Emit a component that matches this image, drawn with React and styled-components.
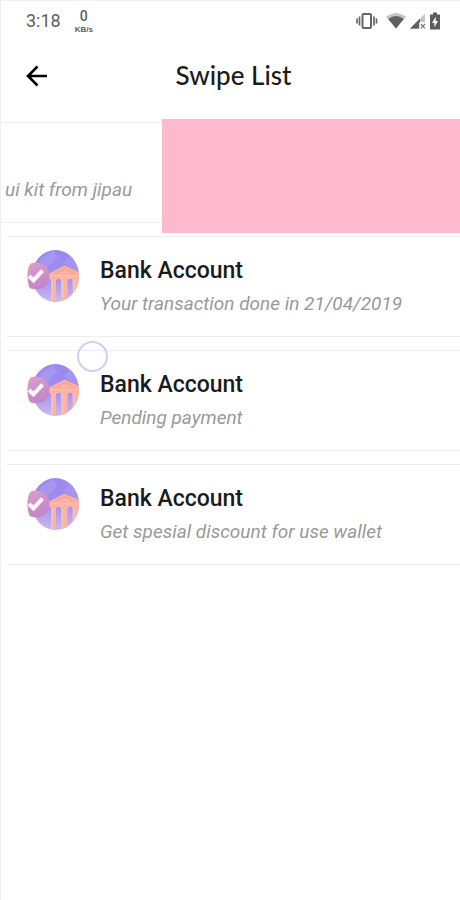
import React from 'react';
import styled, {createGlobalStyle} from 'styled-components';

const GlobalStyle = createGlobalStyle`
    * {
        box-sizing: border-box;
    }

    body {
        margin: 0;
        background: #ffffff;
        font-family: Roboto, "Liberation Sans", sans-serif;
    }
`;

const Screen = styled.div`
    position: relative;
    min-height: 100vh;
    overflow: hidden;
    border-top: 1px solid #f0f0f0;
    border-left: 1px solid #f0f0f0;
`;

const StatusBar = styled.div`
    display: flex;
    align-items: center;
    height: 40px;
    padding: 0 20px 0 25px;
    color: #606060;
`;

const Time = styled.span`
    font-size: 18px;
    line-height: 20px;
`;

const Speed = styled.div`
    display: flex;
    flex-direction: column;
    align-items: center;
    margin-left: 14px;
`;

const SpeedValue = styled.span`
    font-size: 14px;
    font-weight: 500;
    line-height: 17px;
`;

const SpeedUnit = styled.span`
    font-family: "Liberation Sans", sans-serif;
    font-size: 8px;
    font-weight: 700;
    line-height: 9px;
`;

const StatusIcons = styled.div`
    display: flex;
    align-items: center;
    margin-left: auto;
    gap: 4px;
`;

const VibrateIcon = styled.svg`
    margin-right: 4px;
`;

const Header = styled.header`
    display: grid;
    grid-template-columns: 48px 1fr 48px;
    align-items: center;
    height: 70px;
    padding: 0 12px;
`;

const BackButton = styled.button`
    display: flex;
    align-items: center;
    justify-content: center;
    height: 48px;
    padding: 0;
    border: 0;
    background: transparent;
    color: #000000;
    cursor: pointer;
`;

const Title = styled.h1`
    margin: 0;
    padding: 0 0 2px 6px;
    font-family: Lato, sans-serif;
    font-size: 26px;
    font-weight: 500;
    line-height: 30px;
    text-align: center;
    color: #1b1b1b;
`;

const List = styled.ul`
    margin: 0;
    padding: 8px 0 0;
    list-style: none;
`;

const Row = styled.li`
    display: flex;
    height: 114px;
    padding-left: ${props => (props.$swiped ? 0 : '6px')};
`;

const Card = styled.div`
    display: flex;
    flex: ${props => (props.$swiped ? '0 0 35%' : '1')};
    min-width: 0;
    margin: 3px 0 10px;
    padding: ${props => (props.$swiped ? '17px 0 0 4px' : '13px 20px 0')};
    border-top: 1px solid #eeeeee;
    border-bottom: 1px solid #eeeeee;
`;

const SwipeAction = styled.div`
    flex: 1;
    background: #ffb9ce;
`;

const Info = styled.div`
    padding-top: ${props => (props.$swiped ? '35px' : '5px')};
    padding-left: ${props => (props.$swiped ? 0 : '21px')};
    white-space: nowrap;
`;

const Name = styled.h2`
    margin: 0 0 2px;
    font-size: 23px;
    font-weight: 500;
    line-height: 32px;
    color: #1b1b1b;
`;

const Detail = styled.p`
    margin: 0;
    font-size: 19px;
    font-style: italic;
    line-height: 30px;
    color: #999999;
`;

const TouchRing = styled.span`
    position: absolute;
    top: 340px;
    left: 76px;
    width: 31px;
    height: 31px;
    border: 2px solid #ccd0f1;
    border-radius: 50%;
    pointer-events: none;
`;

const accounts = [
    {id: 2, name: 'Bank Account', detail: 'Your transaction done in 21/04/2019'},
    {id: 3, name: 'Bank Account', detail: 'Pending payment'},
    {id: 4, name: 'Bank Account', detail: 'Get spesial discount for use wallet'},
];

const BankIcon = ({id}) => (
    <svg width="52" height="52" viewBox="0 0 52 52" aria-hidden="true">
        <defs>
            <linearGradient id={`sky-${id}`} gradientUnits="userSpaceOnUse" x1="26" y1="0" x2="26" y2="52">
                <stop offset="0" stopColor="#9b87ee" />
                <stop offset="0.5" stopColor="#a08eef" />
                <stop offset="1" stopColor="#cdb9ea" />
            </linearGradient>
            <linearGradient id={`badge-${id}`} x1="0" y1="0" x2="0.3" y2="1">
                <stop offset="0" stopColor="#dda0c8" />
                <stop offset="1" stopColor="#c285ca" />
            </linearGradient>
            <clipPath id={`disc-${id}`}>
                <ellipse cx="28.5" cy="26" rx="23.5" ry="26" />
            </clipPath>
        </defs>
        <g clipPath={`url(#disc-${id})`}>
            <rect width="52" height="52" fill={`url(#sky-${id})`} />
            <path d="M14 9 26 1 31 7 18 20 8 22Z" fill="#a99bf3" opacity="0.7" />
            <path d="M36 12 44 6 52 17 52 23Z" fill="#ab9cf1" opacity="0.6" />
            <path d="M22 23.5 37.5 15.5 52 22V29H22Z" fill="#fbb0a0" />
            <path d="M26 23.5 37.5 17.5 50 23.5Z" fill="#f8a697" />
            <path d="M32 23.2 38 20 44 23.2Z" fill="#ffb8a6" />
            <path d="M22 26H52" stroke="#ffbba8" strokeWidth="2" />
            <path
                d="M23.5 28H30V30H29V52H24.5V30H23.5ZM33 28H41.5V30H40.5V52H34V30H33ZM45 28H52V52H45.5V30H45Z"
                fill="#fab3a6"
            />
            <path d="M25 30V52M35.5 30V52M47 30V52" stroke="#ffc0b0" strokeWidth="1.5" />
        </g>
        <path
            d="M4 13.2Q8 12 13 13.2C19 15 22.5 20 22.5 26C22.5 32 19 37 13 38.8Q8 40 3.5 38.5C1.2 36 .4 31 .4 26C.4 20 1.4 16 4 13.2Z"
            fill={`url(#badge-${id})`}
        />
        <path d="M2 26 6.5 30.3 15.5 20.7" fill="none" stroke="#fff8fd" strokeWidth="4" />
    </svg>
);

const StatusGlyphs = () => (
    <StatusIcons aria-hidden="true">
        <VibrateIcon width="22" height="18" viewBox="0 0 22 18" fill="none" stroke="#666666">
            <rect x="6.5" y="2" width="8.5" height="14" rx="1" strokeWidth="2" />
            <path d="M3.5 4.5V13.5M18 4.5V13.5" strokeWidth="1.7" />
            <path d="M1 6.5V11.5M20.5 6.5V11.5" strokeWidth="1.7" />
        </VibrateIcon>
        <svg width="20" height="18" viewBox="0 0 20 18">
            <path d="M0 4.5Q10-2.5 20 4.5L10 16.5Z" fill="#c4c4c4" />
            <path d="M2.2 7Q10 0.8 17.8 7L10 16.5Z" fill="#606060" />
        </svg>
        <svg width="16" height="18" viewBox="0 0 16 18">
            <path d="M15 1.5V10H9.5V17H0Z" fill="#c4c4c4" />
            <path d="M10 6.5V10L9 11V16.5H0Z" fill="#606060" />
            <path d="M10.8 12 15 16.3M15 12 10.8 16.3" stroke="#777777" strokeWidth="1.2" />
        </svg>
        <svg width="10" height="18" viewBox="0 0 10 18">
            <path d="M3 0.5H7V2.5H10V17.5H0V2.5H3Z" fill="#5c5c5c" />
            <path d="M5.7 4.7 2 11H4.4V15.3L8 9H5.7Z" fill="#ffffff" />
        </svg>
    </StatusIcons>
);

const AccountRow = ({id, name, detail}) => (
    <Row>
        <Card>
            <BankIcon id={id} />
            <Info>
                <Name>{name}</Name>
                <Detail>{detail}</Detail>
            </Info>
        </Card>
    </Row>
);

const App = () => {
    return (
        <>
            <GlobalStyle />
            <Screen>
                <StatusBar>
                    <Time>3:18</Time>
                    <Speed>
                        <SpeedValue>0</SpeedValue>
                        <SpeedUnit>KB/s</SpeedUnit>
                    </Speed>
                    <StatusGlyphs />
                </StatusBar>
                <Header>
                    <BackButton type="button" aria-label="Back">
                        <svg width="22" height="22" viewBox="0 0 22 22" fill="none" stroke="currentColor" strokeWidth="2.6">
                            <path d="M21 11H2M11.5 1.5 2 11 11.5 20.5" />
                        </svg>
                    </BackButton>
                    <Title>Swipe List</Title>
                </Header>
                <List>
                    <Row $swiped>
                        <Card $swiped>
                            <Info $swiped>
                                <Detail>ui kit from jipau</Detail>
                            </Info>
                        </Card>
                        <SwipeAction />
                    </Row>
                    {accounts.map(account => (
                        <AccountRow key={account.id} {...account} />
                    ))}
                </List>
                <TouchRing />
            </Screen>
        </>
    );
};

export default App;
